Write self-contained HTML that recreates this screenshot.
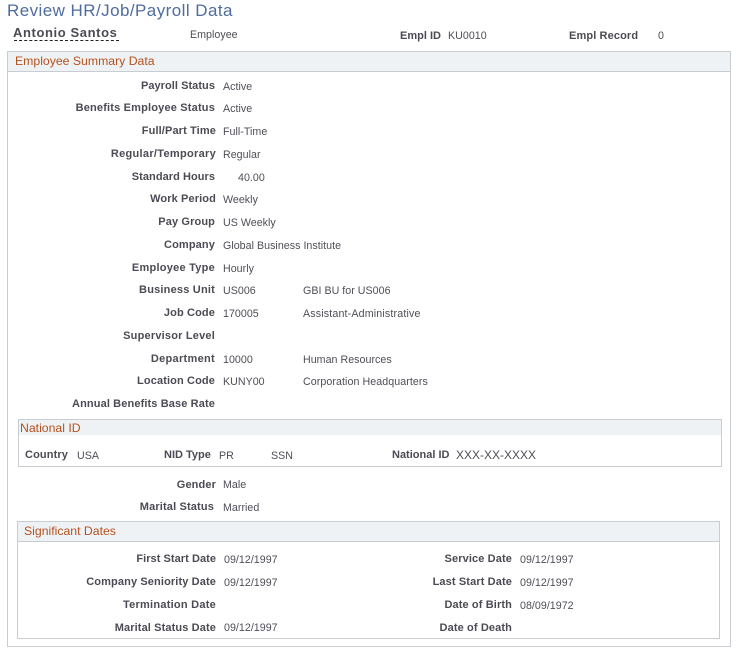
<!DOCTYPE html>
<html><head><meta charset="utf-8"><style>
html,body{margin:0;padding:0;background:#fff;width:736px;height:651px;overflow:hidden}
body{position:relative;font-family:"Liberation Sans",sans-serif}
.a{position:absolute;white-space:nowrap;line-height:14px;height:14px}
.l{font-size:11px;font-weight:bold;color:#4b4b55;letter-spacing:.12px;text-align:right}
.m{right:521px}
.d{right:520px}
.e{right:224px}
.z{letter-spacing:0}
.v{font-size:10.67px;color:#4e4e58;letter-spacing:.03px}
.h{font-size:12.25px;color:#b4521f}
.b{position:absolute;box-sizing:border-box;border:1px solid #c9cdd1}
.f{position:absolute;background:#eff2f4}
</style></head><body>
<div class="a" style="left:7px;top:1px;height:20px;line-height:20px;font-size:17px;color:#4f6c9f;letter-spacing:.44px">Review HR/Job/Payroll Data</div>
<div class="a" style="left:13px;top:26px;font-size:13px;font-weight:bold;color:#4b4b55;letter-spacing:.6px">Antonio Santos</div>
<div style="position:absolute;left:14px;top:40px;width:105px;border-top:1px dashed #222"></div>
<div class="a v" style="left:190px;top:28px">Employee</div>
<div class="a l z" style="left:400px;top:29px">Empl ID</div>
<div class="a v" style="left:448px;top:29px">KU0010</div>
<div class="a l" style="left:569px;top:29px">Empl Record</div>
<div class="a v" style="left:658px;top:29px">0</div>

<div class="b" style="left:7px;top:51px;width:724px;height:596px"></div>
<div class="f" style="left:8px;top:52px;width:722px;height:19px;border-bottom:1px solid #c9cdd1"></div>
<div class="a h" style="left:15px;top:54px">Employee Summary Data</div>

<div class="a l m" style="top:79px;letter-spacing:.05px">Payroll Status</div><div class="a v" style="left:223px;top:80px">Active</div>
<div class="a l m" style="top:101px;letter-spacing:.18px">Benefits Employee Status</div><div class="a v" style="left:223px;top:102px">Active</div>
<div class="a l d" style="top:124px">Full/Part Time</div><div class="a v" style="left:223px;top:125px">Full-Time</div>
<div class="a l d" style="top:147px;letter-spacing:.3px">Regular/Temporary</div><div class="a v" style="left:223px;top:148px">Regular</div>
<div class="a l m" style="top:170px;letter-spacing:.05px">Standard Hours</div><div class="a v" style="left:238px;top:171px">40.00</div>
<div class="a l d" style="top:192px">Work Period</div><div class="a v" style="left:223px;top:193px">Weekly</div>
<div class="a l m" style="top:215px">Pay Group</div><div class="a v" style="left:223px;top:216px">US Weekly</div>
<div class="a l m" style="top:238px">Company</div><div class="a v" style="left:223px;top:239px">Global Business Institute</div>
<div class="a l m" style="top:261px;letter-spacing:.25px">Employee Type</div><div class="a v" style="left:223px;top:262px">Hourly</div>
<div class="a l m" style="top:283px;letter-spacing:.2px">Business Unit</div><div class="a v" style="left:223px;top:284px">US006</div><div class="a v" style="left:303px;top:284px">GBI BU for US006</div>
<div class="a l m" style="top:306px">Job Code</div><div class="a v" style="left:223px;top:307px">170005</div><div class="a v" style="left:303px;top:307px;letter-spacing:.16px">Assistant-Administrative</div>
<div class="a l m" style="top:329px;letter-spacing:.2px">Supervisor Level</div>
<div class="a l m" style="top:352px;letter-spacing:.3px">Department</div><div class="a v" style="left:223px;top:353px">10000</div><div class="a v" style="left:303px;top:353px">Human Resources</div>
<div class="a l m" style="top:374px">Location Code</div><div class="a v" style="left:223px;top:375px">KUNY00</div><div class="a v" style="left:303px;top:375px;letter-spacing:.07px">Corporation Headquarters</div>
<div class="a l m" style="top:397px">Annual Benefits Base Rate</div>

<div class="b" style="left:18px;top:419px;width:704px;height:48px"></div>
<div class="f" style="left:19px;top:420px;width:702px;height:15px"></div>
<div class="a h" style="left:20px;top:421px">National ID</div>
<div class="a l" style="left:25px;top:448px">Country</div><div class="a v" style="left:77px;top:449px">USA</div>
<div class="a l z" style="left:164px;top:448px">NID Type</div><div class="a v" style="left:219px;top:449px">PR</div><div class="a v" style="left:271px;top:449px">SSN</div>
<div class="a l z" style="left:392px;top:448px">National ID</div><div class="a" style="left:456px;top:448px;font-size:12px;color:#4e4e58">XXX-XX-XXXX</div>

<div class="a l d" style="top:478px">Gender</div><div class="a v" style="left:223px;top:478px">Male</div>
<div class="a l" style="right:522px;top:500px;letter-spacing:.15px">Marital Status</div><div class="a v" style="left:223px;top:501px">Married</div>

<div class="b" style="left:17px;top:521px;width:703px;height:118px"></div>
<div class="f" style="left:18px;top:522px;width:701px;height:19px;border-bottom:1px solid #c9cdd1"></div>
<div class="a h" style="left:24px;top:524px">Significant Dates</div>

<div class="a l d" style="top:552px;letter-spacing:.05px">First Start Date</div><div class="a v" style="left:224px;top:553px">09/12/1997</div>
<div class="a l d" style="top:575px">Company Seniority Date</div><div class="a v" style="left:224px;top:576px">09/12/1997</div>
<div class="a l d" style="top:598px;letter-spacing:.25px">Termination Date</div>
<div class="a l d" style="top:621px">Marital Status Date</div><div class="a v" style="left:224px;top:621px">09/12/1997</div>
<div class="a l e" style="top:552px">Service Date</div><div class="a v" style="left:520px;top:553px">09/12/1997</div>
<div class="a l e" style="top:575px">Last Start Date</div><div class="a v" style="left:520px;top:576px">09/12/1997</div>
<div class="a l e" style="top:598px">Date of Birth</div><div class="a v" style="left:520px;top:599px">08/09/1972</div>
<div class="a l e" style="top:621px">Date of Death</div>
</body></html>
